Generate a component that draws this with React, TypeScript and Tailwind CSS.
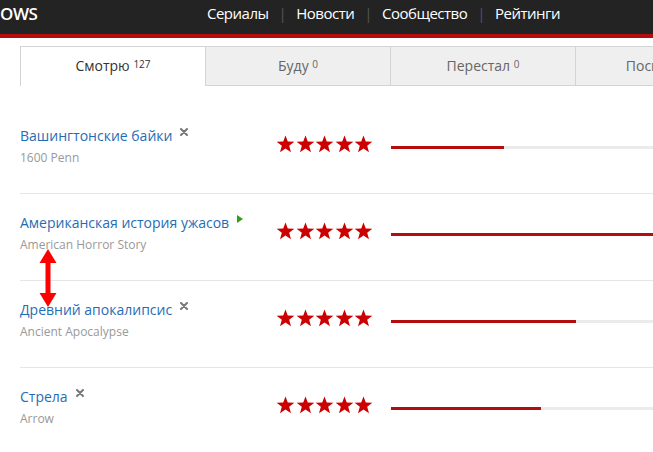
import React from "react";

const Star = () => (
  <svg width="19" height="18" viewBox="0 0 24 23" className="block">
    <polygon
      points="12,0.5 14.9,8.4 23.3,8.6 16.7,13.8 19,21.9 12,17.2 5,21.9 7.3,13.8 0.7,8.6 9.1,8.4"
      fill="#cc0000"
    />
  </svg>
);

const Stars = () => (
  <div className="flex gap-[0.5px]">
    <Star />
    <Star />
    <Star />
    <Star />
    <Star />
  </div>
);

type Row = { ru: string; en: string; fill: number; icon: "x" | "play" };

const rows: Row[] = [
  { ru: "Вашингтонские байки", en: "1600 Penn", fill: 113, icon: "x" },
  { ru: "Американская история ужасов", en: "American Horror Story", fill: 400, icon: "play" },
  { ru: "Древний апокалипсис", en: "Ancient Apocalypse", fill: 185, icon: "x" },
  { ru: "Стрела", en: "Arrow", fill: 150, icon: "x" },
];

const XIcon = () => (
  <svg width="8" height="8" viewBox="0 0 8 8" className="block">
    <path d="M1 1 L7 7 M7 1 L1 7" stroke="#777" strokeWidth="2" strokeLinecap="round" />
  </svg>
);

const PlayIcon = () => (
  <svg width="6" height="8" viewBox="0 0 6 8" className="block">
    <polygon points="0,0 6,4 0,8" fill="#3a9a1a" />
  </svg>
);

const Tab = ({ label, count, active }: { label: string; count: string; active?: boolean }) => (
  <div
    className={
      "w-[185px] shrink-0 h-[40px] flex items-center justify-center text-[14px] border-t border-l border-[#d4d4d4] " +
      (active ? "bg-white text-[#333]" : "bg-[#efefef] text-[#666] border-b")
    }
  >
    <span className="-mt-[2px]">
      {label} <sup className="text-[10px] relative -top-[3px]">{count}</sup>
    </span>
  </div>
);

export default function App() {
  return (
    <div
      className="relative w-[653px] h-[452px] overflow-hidden bg-white"
      style={{ fontFamily: '"Open Sans", "DejaVu Sans", sans-serif' }}
    >
      <header className="h-[38px] bg-[#232323] border-b-[4px] border-[#b40d0d] flex items-center">
        <div className="text-white text-[17px] font-semibold w-[207px] -mt-[7px] tracking-[-0.5px]">OWS</div>
        <nav className="flex items-center text-white text-[15px] -mt-[7px] tracking-[-0.5px]">
          <span>Сериалы</span>
          <span className="mx-[10px] text-[#555]">|</span>
          <span>Новости</span>
          <span className="mx-[10px] text-[#555]">|</span>
          <span>Сообщество</span>
          <span className="mx-[10px] text-[#555]">|</span>
          <span>Рейтинги</span>
        </nav>
      </header>

      <div className="pl-[20px] pt-[8px]">
        <div className="flex">
          <Tab label="Смотрю" count="127" active />
          <Tab label="Буду" count="0" />
          <Tab label="Перестал" count="0" />
          <Tab label="Посмотрел" count="0" />
        </div>

        <div className="pt-[21px] w-[900px]">
          {rows.map((r, i) => (
            <div
              key={i}
              className={"flex h-[87px] pt-[18px] " + (i < rows.length - 1 ? "border-b border-[#e6e6e6]" : "")}
            >
              <div className="w-[256px] shrink-0">
                <div className="flex items-start">
                  <a className="text-[14px] leading-[22px] text-[#1f6db6]">{r.ru}</a>
                  <span className="ml-[8px] mt-[3px]">{r.icon === "x" ? <XIcon /> : <PlayIcon />}</span>
                </div>
                <div className="text-[12px] leading-[20px] text-[#999] mt-[1px]">{r.en}</div>
              </div>
              <div className="pt-[10px] shrink-0">
                <Stars />
              </div>
              <div className="ml-[18px] pt-[21px] w-[520px]">
                <div className="h-[3px] bg-[#ebebeb]">
                  <div className="h-[3px] bg-[#b40d0d]" style={{ width: r.fill }} />
                </div>
              </div>
            </div>
          ))}
        </div>
      </div>

      <svg width="18" height="58" viewBox="0 0 18 58" className="absolute left-[39px] top-[249px]">
        <polygon points="9,0 17.5,14 11.5,14 11.5,44 17.5,44 9,58 0.5,44 6.5,44 6.5,14 0.5,14" fill="#ff0000" />
      </svg>
    </div>
  );
}
